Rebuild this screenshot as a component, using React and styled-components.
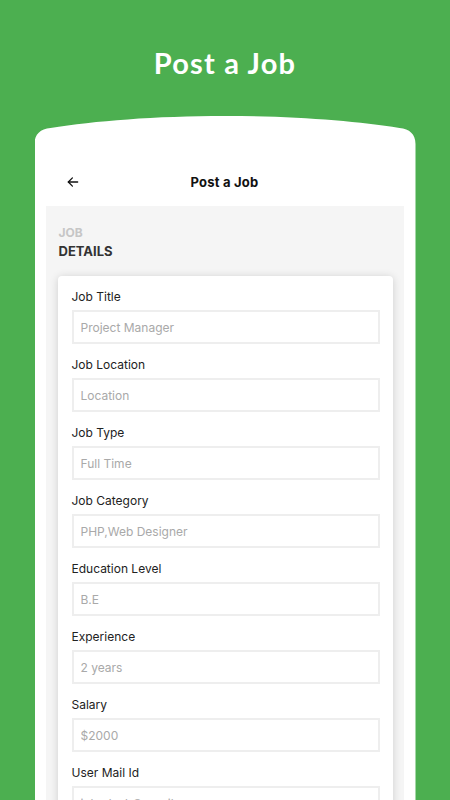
import React from 'react'
import styled, { createGlobalStyle } from 'styled-components'

const fields = [
    { label: 'Job Title', placeholder: 'Project Manager' },
    { label: 'Job Location', placeholder: 'Location' },
    { label: 'Job Type', placeholder: 'Full Time' },
    { label: 'Job Category', placeholder: 'PHP,Web Designer' },
    { label: 'Education Level', placeholder: 'B.E' },
    { label: 'Experience', placeholder: '2 years' },
    { label: 'Salary', placeholder: '$2000' },
    { label: 'User Mail Id', placeholder: 'jobsdesk@gmail.com' },
]

const Global = createGlobalStyle`
    *{ box-sizing:border-box; }
    body{
        margin:0;
        background:#4caf50;
        font-family:Inter, "Noto Sans", sans-serif;
        overflow:hidden;
    }
`

const App = () => {
  return (
    <Cover>
        <Global />
        <Title>Post a Job</Title>
        <Phone>
            <TopBar>
                <Back>
                    <svg width="14" height="14" viewBox="0 0 24 24" fill="none" stroke="#111" strokeWidth="2.2" strokeLinecap="round" strokeLinejoin="round">
                        <path d="M20 12H4" />
                        <path d="M11 5l-7 7 7 7" />
                    </svg>
                </Back>
                <h4>Post a Job</h4>
            </TopBar>
            <Screen>
                <Section>
                    <span>JOB</span>
                    <h5>DETAILS</h5>
                </Section>
                <Card>
                    {fields.map((item)=>(
                        <Field key={item.label}>
                            <Label>{item.label}</Label>
                            <Input placeholder={item.placeholder} readOnly />
                        </Field>
                    ))}
                </Card>
            </Screen>
        </Phone>
    </Cover>
  )
}

export default App

const Cover = styled.div`
    width:450px;
    height:800px;
    overflow:hidden;
    background:#4caf50;
    display:flex;
    flex-direction:column;
    align-items:center;
`;
const Title = styled.h1`
    margin:43px 0 0;
    height:40px;
    font-family:Lato, sans-serif;
    font-weight:700;
    font-size:29px;
    letter-spacing:1.2px;
    line-height:40px;
    color:#fff;
`;
// phone mockup: curved top edge
const Phone = styled.div`
    margin-top:33px;
    width:381px;
    flex:1;
    background:#fff;
    padding:0 12px 0 11px;
    clip-path:path('M0 700 L0 28 C0 18 6 13 16 12 C60 5 120 0 190.5 0 C261 0 321 5 365 12 C375 13 381 18 381 28 L381 700 Z');
`;
const TopBar = styled.div`
    position:relative;
    height:90px;
    display:flex;
    justify-content:center;
    padding-top:58px;
    h4{
        margin:0;
        font-size:13px;
        line-height:16px;
        font-weight:700;
        color:#111;
        letter-spacing:0.2px;
    }
`;
const Back = styled.div`
    position:absolute;
    left:20px;
    top:59px;
    display:flex;
`;
const Screen = styled.div`
    background:#f5f5f5;
    height:100%;
    padding:19px 11px 0 12px;
`;
const Section = styled.div`
    padding-left:1px;
    span{
        display:block;
        font-size:12px;
        font-weight:700;
        color:#c6c6c6;
        line-height:15px;
    }
    h5{
        margin:3px 0 0;
        font-size:13px;
        font-weight:700;
        color:#333;
        line-height:16px;
    }
`;
const Card = styled.div`
    margin-top:17px;
    background:#fff;
    border-radius:4px;
    box-shadow:0 1px 8px rgba(0,0,0,0.16);
    padding:13px 13px 20px 14px;
    display:flex;
    flex-direction:column;
    gap:13px;
`;
const Field = styled.div`
    display:flex;
    flex-direction:column;
    gap:5px;
`;
const Label = styled.label`
    font-size:12px;
    line-height:16px;
    color:#222;
`;
const Input = styled.input`
    height:34px;
    border:2px solid #eeeeee;
    outline:none;
    padding:0 7px;
    font-family:Inter, "Noto Sans", sans-serif;
    font-size:12px;
    background:#fff;
    &::placeholder{
        color:#a9a9a9;
    }
`;
